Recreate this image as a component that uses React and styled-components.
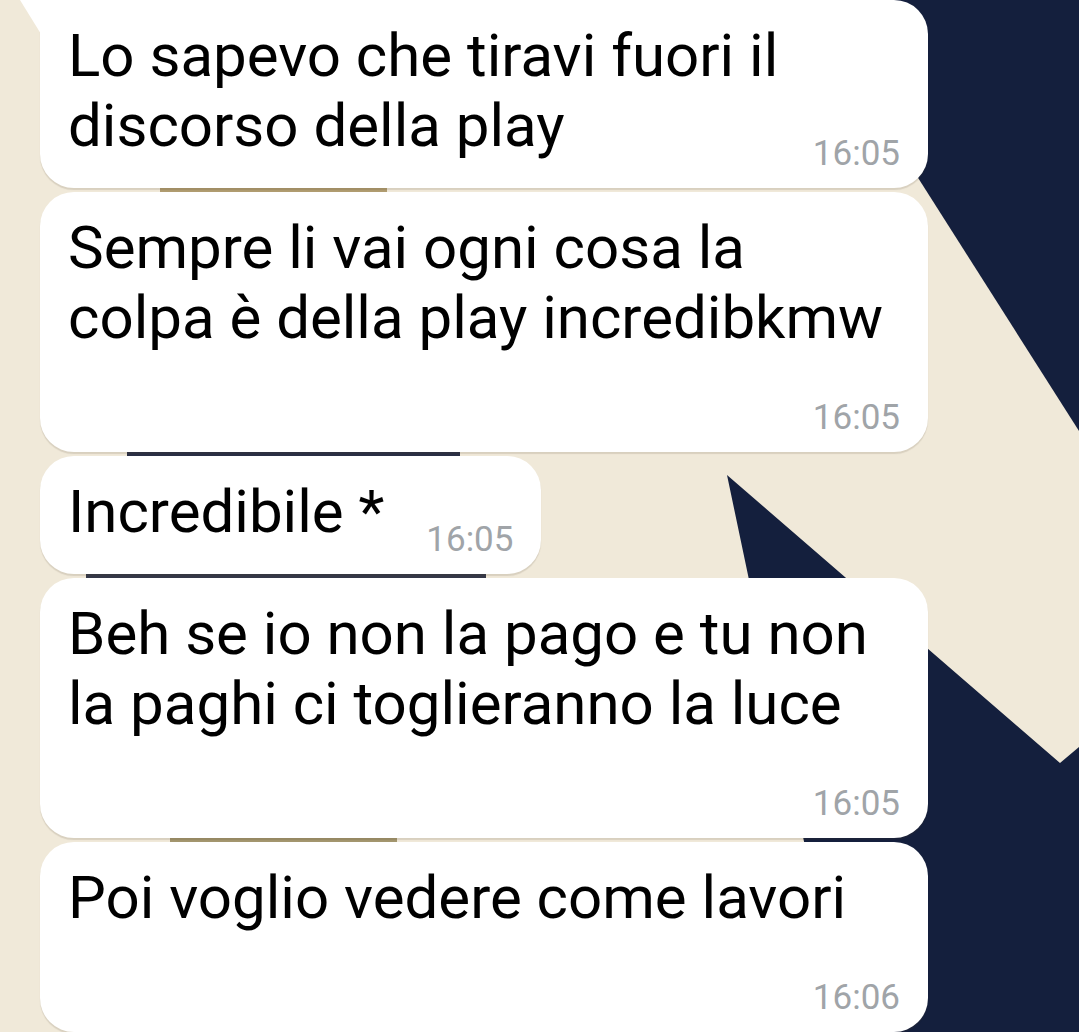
import React from 'react';
import styled, { createGlobalStyle, css } from 'styled-components';

const MESSAGES = [
  {
    id: 'm1',
    lines: ['Lo sapevo che tiravi fuori il', 'discorso della play'],
    time: '16:05',
    inline: true,
    tail: true,
    wide: true
  },
  {
    id: 'm2',
    lines: ['Sempre li vai ogni cosa la', 'colpa è della play incredibkmw'],
    time: '16:05',
    wide: true
  },
  {
    id: 'm3',
    lines: ['Incredibile *'],
    time: '16:05',
    inline: true
  },
  {
    id: 'm4',
    lines: ['Beh se io non la pago e tu non', 'la paghi ci toglieranno la luce'],
    time: '16:05',
    wide: true
  },
  {
    id: 'm5',
    lines: ['Poi voglio vedere come lavori'],
    time: '16:06',
    wide: true
  }
];

const GlobalStyle = createGlobalStyle`
  html,
  body {
    margin: 0;
    padding: 0;
    background: #f0e9d9;
  }

  body {
    font-family: Roboto, 'Noto Sans', 'Liberation Sans', sans-serif;
    -webkit-font-smoothing: antialiased;
  }
`;

const Page = styled.div`
  position: relative;
  height: 1032px;
  overflow: hidden;

  background: #f0e9d9;
`;

const Wallpaper = styled.svg`
  position: absolute;
  top: 0;
  left: 0;
  width: 1079px;
  height: 1032px;
  z-index: 0;
`;

const Thread = styled.div`
  position: relative;
  z-index: 1;

  display: flex;
  flex-direction: column;
  align-items: flex-start;
  gap: 4px;

  width: 888px;
  margin-left: 40px;
`;

const Bubble = styled.div`
  position: relative;
  box-sizing: border-box;

  align-self: ${props => (props.$wide ? 'stretch' : 'flex-start')};

  padding: 21px 28px 27px;

  background: #fff;
  border-radius: 34px;
  box-shadow: 0 2px 1px rgba(70, 60, 35, 0.14);

  ${props =>
    props.$tail &&
    css`
      border-top-left-radius: 0;

      &::before {
        content: '';
        position: absolute;
        top: 0;
        left: -20px;
        width: 21px;
        height: 34px;

        background: #fff;
        clip-path: polygon(0 0, 100% 0, 100% 100%);
      }
    `}
`;

const Body = styled.div`
  display: flex;
  align-items: flex-end;
  justify-content: space-between;
  gap: 42px;
`;

const Text = styled.div`
  min-width: 0;

  font-size: 60px;
  line-height: 70px;
  color: #000;
  white-space: nowrap;
`;

const TimeRow = styled.div`
  display: flex;
  align-items: flex-end;
  justify-content: flex-end;

  height: 72px;
`;

const Time = styled.span`
  flex: 0 0 auto;

  margin-bottom: -10px;

  font-size: 35px;
  line-height: 35px;
  color: #a0a4a8;
`;

function Message({ lines, time, inline, tail, wide }) {
  const text = (
    <Text>
      {lines.map(line => (
        <div key={line}>{line}</div>
      ))}
    </Text>
  );

  return (
    <Bubble $tail={tail} $wide={wide}>
      {inline ? (
        <Body>
          {text}
          <Time>{time}</Time>
        </Body>
      ) : (
        <>
          {text}
          <TimeRow>
            <Time>{time}</Time>
          </TimeRow>
        </>
      )}
    </Bubble>
  );
}

function Background() {
  return (
    <Wallpaper viewBox="0 0 1079 1032" aria-hidden="true">
      <polygon points="805,0 1079,0 1079,431" fill="#141f3d" />
      <polygon
        points="727,475 1060,763 1079,747 1079,1032 844,1032"
        fill="#141f3d"
      />
      {/* bits of the wallpaper that show between bubbles */}
      <rect x="160" y="188" width="227" height="5" fill="#b09c70" />
      <rect x="127" y="452" width="333" height="5" fill="#2a2f45" />
      <rect x="86" y="574" width="400" height="5" fill="#343848" />
      <rect x="170" y="838" width="227" height="5" fill="#a3966e" />
    </Wallpaper>
  );
}

export default function App() {
  return (
    <Page>
      <GlobalStyle />
      <Background />
      <Thread>
        {MESSAGES.map(msg => (
          <Message key={msg.id} {...msg} />
        ))}
      </Thread>
    </Page>
  );
}
